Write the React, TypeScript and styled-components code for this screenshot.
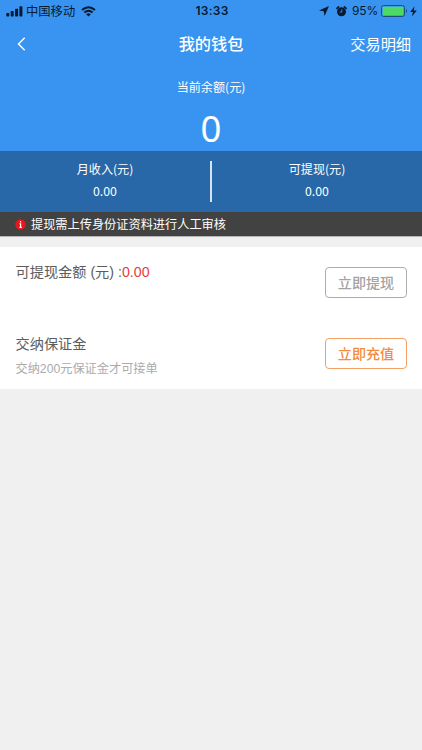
import React from 'react';
import styled, { createGlobalStyle } from 'styled-components';

const GlobalStyle = createGlobalStyle`
  * { box-sizing: border-box; }
  body { margin: 0; background: #f0f0f0; }
`;

const cjk = '"Noto Sans CJK SC", sans-serif';

const Page = styled.div`
  display: flex;
  flex-direction: column;
  height: 750px;
  background: #f0f0f0;
  font-family: "Liberation Sans", ${cjk};
`;

const Hero = styled.header`
  height: 151px;
  background: #3994f1;
  color: #fff;
`;

const StatusBar = styled.div`
  display: grid;
  grid-template-columns: 1fr auto 1fr;
  align-items: center;
  height: 22px;
  padding: 0 5px 0 6px;
  color: #071a30;
`;

const StatusGroup = styled.div<{ $end?: boolean }>`
  display: flex;
  align-items: center;
  justify-content: ${(p) => (p.$end ? 'flex-end' : 'flex-start')};
`;

const Icon = styled.svg<{ $gap?: number }>`
  display: block;
  flex: none;
  margin-left: ${(p) => p.$gap ?? 0}px;
`;

const Carrier = styled.span`
  margin-left: 3px;
  font: 12.3px/22px ${cjk};
`;

const Clock = styled.span`
  padding-left: 1px;
  font: 600 12px/22px Inter, sans-serif;
  letter-spacing: 0.25px;
`;

const Percent = styled.span`
  margin-left: 5px;
  font: 12px/22px Inter, sans-serif;
  letter-spacing: -0.2px;
`;

const NavBar = styled.nav`
  display: grid;
  grid-template-columns: 1fr auto 1fr;
  align-items: center;
  height: 44px;
  padding: 0 11px;
`;

const Back = styled.button`
  width: 9px;
  margin-left: 6px;
  padding: 0;
  border: 0;
  background: none;
  color: inherit;
`;

const Title = styled.h1`
  margin: 0;
  padding-bottom: 2px;
  font: 500 16.2px/42px ${cjk};
`;

const Details = styled.a`
  justify-self: end;
  padding-bottom: 2px;
  font: 15.2px/42px ${cjk};
`;

const Balance = styled.section`
  display: flex;
  flex-direction: column;
  align-items: center;
  padding-top: 11px;
`;

const BalanceLabel = styled.div`
  font: 12.1px/20px ${cjk};
`;

const BalanceValue = styled.div`
  margin-top: 7px;
  font: 400 36.5px/48px "Noto Sans", sans-serif;
`;

const Stats = styled.section`
  display: grid;
  grid-template-columns: 1fr 2px 1fr;
  height: 61px;
  padding-top: 8px;
  background: #2868a9;
  color: #fff;
`;

const Stat = styled.div`
  display: flex;
  flex-direction: column;
  align-items: center;
  gap: 1px;
  font: 12.1px/20px ${cjk};
`;

const Amount = styled.span`
  font: 12.3px/22px ${cjk};
`;

const Divider = styled.div`
  width: 1.5px;
  height: 41px;
  margin-top: 2px;
  background: #d5e4f2;
`;

const Notice = styled.div`
  display: flex;
  align-items: center;
  height: 25px;
  padding-left: 15px;
  background: #424242;
  border-bottom: 1px solid #b5b5b5;
  color: #fff;
  font: 12.2px/24px ${cjk};
`;

const NoticeText = styled.span`
  margin-left: 5px;
`;

const Card = styled.main`
  height: 142px;
  margin-top: 10px;
  background: #fff;
`;

const Row = styled.section`
  display: flex;
  justify-content: space-between;
  height: 71px;
  padding: 14px 15px 0 15.5px;
`;

const RowTitle = styled.div`
  font: 14.2px/22px "Liberation Sans", ${cjk};
  color: #5c5c5c;
`;

const Deposit = styled.div`
  padding-top: 1px;
`;

const Red = styled.span`
  color: #e2403b;
`;

const Hint = styled.div`
  margin-top: 4px;
  font: 12.2px/20px "Liberation Sans", ${cjk};
  color: #ababab;
`;

const Action = styled.button<{ $color: string; $border: string }>`
  width: 82px;
  height: 31px;
  margin-top: 6px;
  padding: 0;
  border: 1px solid ${(p) => p.$border};
  border-radius: 4px;
  background: #fff;
  color: ${(p) => p.$color};
  font: 500 14.1px/27px ${cjk};
`;

export default function App() {
  return (
    <>
      <GlobalStyle />
      <Page>
        <Hero>
          <StatusBar>
            <StatusGroup>
              <Icon width="17" height="11" viewBox="0 0 17 11" fill="currentColor">
                <rect x="0.3" y="7" width="3" height="3.5" rx="0.7" />
                <rect x="4.7" y="5" width="3" height="5.5" rx="0.7" />
                <rect x="9.1" y="2.7" width="3" height="7.8" rx="0.7" />
                <rect x="13.4" y="0.2" width="3" height="10.3" rx="0.7" />
              </Icon>
              <Carrier>中国移动</Carrier>
              <Icon $gap={6} width="15" height="11" viewBox="0 0 15 11" fill="none" stroke="currentColor" strokeWidth="2">
                <path d="M1 4.1Q7.5-1.7 14 4.1M3.4 6.6Q7.5 3 11.6 6.6" />
                <path d="M5.2 8.2Q7.5 6.3 9.8 8.2L7.5 10.6Z" fill="currentColor" stroke="none" />
              </Icon>
            </StatusGroup>
            <Clock>13:33</Clock>
            <StatusGroup $end>
              <Icon width="10" height="10" viewBox="0 0 10 10" fill="currentColor">
                <path d="M10 0L5.6 10L4.7 5.3L0 4.4Z" />
              </Icon>
              <Icon $gap={7} width="11" height="11" viewBox="0 0 11 11">
                <circle cx="5.5" cy="5.8" r="4.5" fill="currentColor" />
                <path d="M0.9 2.4L2.6 0.9M10.1 2.4L8.4 0.9" stroke="currentColor" strokeWidth="1.6" strokeLinecap="round" />
                <path d="M5.8 3.4V6.1H3.6" stroke="#3994f1" strokeWidth="0.9" fill="none" />
              </Icon>
              <Percent>95%</Percent>
              <Icon $gap={3} width="27" height="12" viewBox="0 0 27 12">
                <rect x="0.5" y="0.5" width="23" height="11" rx="2" fill="none" stroke="#1d5184" />
                <rect x="1.7" y="1.7" width="20.6" height="8.6" rx="0.8" fill="#4cd964" />
                <path d="M25 4C26.5 4.7 26.5 7.3 25 8Z" fill="#1d5184" />
              </Icon>
              <Icon $gap={2} width="7" height="11" viewBox="0 0 7 11" fill="currentColor">
                <path d="M4.5 0.3L0.2 6H3L1.9 10.5L6.8 4.4H3.8Z" />
              </Icon>
            </StatusGroup>
          </StatusBar>
          <NavBar>
            <Back aria-label="返回">
              <Icon width="9" height="14" viewBox="0 0 9 14" fill="none" stroke="currentColor" strokeWidth="1.4">
                <path d="M7.7 0.8L1.5 7L7.7 13.2" />
              </Icon>
            </Back>
            <Title>我的钱包</Title>
            <Details>交易明细</Details>
          </NavBar>
          <Balance>
            <BalanceLabel>当前余额(元)</BalanceLabel>
            <BalanceValue>0</BalanceValue>
          </Balance>
        </Hero>
        <Stats>
          <Stat>月收入(元)<Amount>0.00</Amount></Stat>
          <Divider />
          <Stat>可提现(元)<Amount>0.00</Amount></Stat>
        </Stats>
        <Notice>
          <Icon width="11" height="11" viewBox="0 0 11 11">
            <circle cx="5.5" cy="5.5" r="5.3" fill="#e9151b" />
            <path d="M5.5 2V3.5M4.6 4.9H5.6V8.3M4.4 8.4H6.8" stroke="#fff" strokeWidth="1.2" fill="none" />
          </Icon>
          <NoticeText>提现需上传身份证资料进行人工审核</NoticeText>
        </Notice>
        <Card>
          <Row>
            <RowTitle>可提现金额 (元) :<Red>0.00</Red></RowTitle>
            <Action $color="#a3a3a3" $border="#acacac">立即提现</Action>
          </Row>
          <Row>
            <Deposit>
              <RowTitle>交纳保证金</RowTitle>
              <Hint>交纳200元保证金才可接单</Hint>
            </Deposit>
            <Action $color="#f58b3c" $border="#f5a064">立即充值</Action>
          </Row>
        </Card>
      </Page>
    </>
  );
}
